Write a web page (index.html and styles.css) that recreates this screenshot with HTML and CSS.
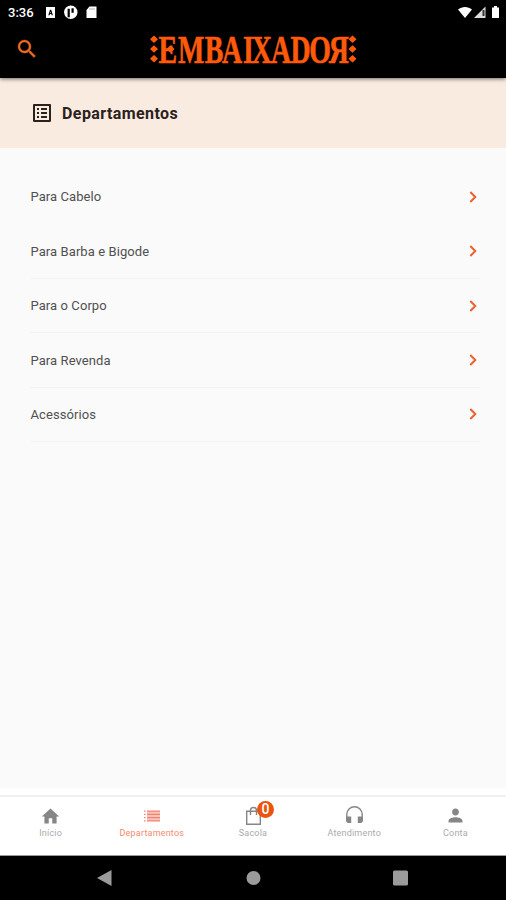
FILE: index.html
```html
<!DOCTYPE html>
<html lang="pt-BR">
<head>
  <meta charset="UTF-8" />
  <meta name="viewport" content="width=device-width, initial-scale=1.0" />
  <title>Embaixador - Departamentos</title>
  <link rel="stylesheet" href="styles.css">
</head>
<body>

<header class="top">
  <div class="status">
    <span class="clock">3:36</span>
    <svg class="notices" width="54" height="16" viewBox="0 0 54 16">
      <path fill="#fff" fill-rule="evenodd" d="M2 3h9v11H2zM4.300 11.200h1.300l.4-1.200h1.300l.4 1.200h1.200L7.200 5.800H6zM6.200 9l.4-1.600.5 1.600z"/>
      <circle cx="26.800" cy="8.300" r="6.700" fill="#fff"/>
      <path d="M24.700 4.800v8.400M28.600 4.200v4.600" stroke="#000" stroke-width="2.200"/>
      <path fill="#fff" d="M45.500 2.500h7v11.500H42.500v-8z"/>
      <path d="M46 4v2M48 4v2M50 4v2" stroke="#999" stroke-width=".8"/>
    </svg>
    <svg class="signals" width="46" height="16" viewBox="0 0 46 16">
      <path fill="#fff" d="M1 5.500C5 2 11 2 15 5.500L8 14z"/>
      <path fill="#ddd" d="M17 14L28.500 2.500V14z"/>
      <path d="M26.500 6v6" stroke="#333" stroke-width="2"/>
      <path fill="#fff" d="M35 3.500h2V2h3v1.500h2V14h-7z"/>
    </svg>
  </div>
  <div class="brand-bar">
    <svg class="search" width="24" height="24" viewBox="0 0 24 24">
      <path d="M15.500 14h-.79l-.28-.27A6.471 6.471 0 0 0 16 9.500 6.500 6.500 0 1 0 9.500 16c1.610 0 3.090-.59 4.230-1.570l.27.28v.79l5 4.990L20.490 19l-4.990-5zm-6 0C7.010 14 5 11.990 5 9.500S7.010 5 9.500 5 14 7.010 14 9.500 11.990 14 9.500 14z"/>
    </svg>
    <svg class="logo" width="208" height="34" viewBox="0 0 208 34">
      <g class="logo-marks">
        <path d="M5 3.500l4 3.800-4 3.800-4-3.800zM5 13.200l4 3.800-4 3.800-4-3.800zM5 22.900l4 3.800-4 3.800-4-3.800z"/>
        <path d="M203.500 3.500l4 3.800-4 3.800-4-3.800zM203.500 13.200l4 3.800-4 3.800-4-3.800zM203.500 22.900l4 3.800-4 3.800-4-3.800z"/>
        <path d="M21.500 13.300l4 3.700-4 3.700-4-3.700z"/>
      </g>
      <text class="logo-text" transform="scale(.68 1)" y="30.500" x="14 42.500 82 107.400 138.200 151.200 179.400 208 235.600 264.500">EMBAIXADOЯ</text>
    </svg>
  </div>
</header>

<section class="heading">
  <svg width="24" height="24" viewBox="0 0 24 24">
    <path fill="#2b211d" d="M19 5v14H5V5h14m1.100-2H3.900c-.5 0-.9.4-.9.900v16.200c0 .4.400.9.900.9h16.200c.4 0 .9-.5.900-.9V3.900c0-.5-.5-.9-.9-.9zM11 7h6v2h-6V7zm0 4h6v2h-6v-2zm0 4h6v2h-6zM7 7h2v2H7zm0 4h2v2H7zm0 4h2v2H7z"/>
  </svg>
  <h1>Departamentos</h1>
</section>

<main>
  <ul class="departments">
    <li><span>Para Cabelo</span><svg class="chevron" viewBox="0 0 8 12"><path d="M1.300 1l5 5-5 5"/></svg></li>
    <li><span>Para Barba e Bigode</span><svg class="chevron" viewBox="0 0 8 12"><path d="M1.300 1l5 5-5 5"/></svg></li>
    <li><span>Para o Corpo</span><svg class="chevron" viewBox="0 0 8 12"><path d="M1.300 1l5 5-5 5"/></svg></li>
    <li><span>Para Revenda</span><svg class="chevron" viewBox="0 0 8 12"><path d="M1.300 1l5 5-5 5"/></svg></li>
    <li><span>Acessórios</span><svg class="chevron" viewBox="0 0 8 12"><path d="M1.300 1l5 5-5 5"/></svg></li>
  </ul>
</main>

<nav class="tabs">
  <a class="tab">
    <svg width="21" height="20" viewBox="0 0 24 23"><path d="M10 20v-6h4v6h5v-8h3L12 3 2 12h3v8z"/></svg>
    <span>Início</span>
  </a>
  <a class="tab active">
    <svg width="20" height="20" viewBox="0 0 20 20">
      <path class="list-fill" d="M5 5h13v10H5z"/>
      <path d="M5 4.500h13v1.300H5zM5 7.800h13v1.300H5zM5 11h13v1.300H5zM5 14.200h13v1.300H5zM2 4.500h1.500v1.300H2zM2 7.800h1.500v1.300H2zM2 11h1.500v1.300H2zM2 14.200h1.500v1.300H2z"/>
    </svg>
    <span>Departamentos</span>
  </a>
  <a class="tab">
    <span class="bag">
      <svg width="20" height="20" viewBox="0 0 20 20"><path class="line" d="M3.700 5.300h13.600v13H3.700zM7.500 9V4.500a3 3 0 0 1 6 0V9"/></svg>
      <b class="badge">0</b>
    </span>
    <span>Sacola</span>
  </a>
  <a class="tab">
    <svg width="20" height="20" viewBox="0 0 20 20"><path class="line" d="M2.800 15V8.500a7.700 7.700 0 0 1 15.400 0V15"/><path d="M2.200 10.500h5V17H3.700L2.200 15.500zM13.800 10.500h5v5L17.300 17h-3.500z"/></svg>
    <span>Atendimento</span>
  </a>
  <a class="tab">
    <svg width="21" height="20" viewBox="0 1 24 23"><path d="M12 12c2.210 0 4-1.790 4-4s-1.790-4-4-4-4 1.790-4 4 1.790 4 4 4zm0 2c-2.670 0-8 1.340-8 4v2h16v-2c0-2.660-5.330-4-8-4z"/></svg>
    <span>Conta</span>
  </a>
</nav>

<footer class="system">
  <svg width="16" height="18" viewBox="0 0 16 18"><path d="M-1 9L13.500 1v16z"/></svg>
  <svg width="16" height="18" viewBox="0 0 16 18"><circle cx="8.500" cy="9" r="7"/></svg>
  <svg width="16" height="18" viewBox="0 0 16 18"><rect x="1" y="1.500" width="15" height="15" rx="1.500"/></svg>
</footer>

</body>
</html>
```
FILE: styles.css
```css
* {
  box-sizing: border-box;
}
body {
  margin: 0;
  height: 900px;
  display: flex;
  flex-direction: column;
  background: #fafafa;
  font-family: Roboto, "Liberation Sans", sans-serif;
  color: #505050;
  overflow: hidden;
}
svg {
  display: block;
  flex: none;
  overflow: visible;
}

/* status bar + logo */
.top {
  position: relative;
  height: 78px;
  background: #000;
  box-shadow: 0 1px 4px rgba(0, 0, 0, 0.55);
}
.status {
  display: flex;
  align-items: center;
  height: 24px;
  padding: 0 5px 0 8px;
}
.clock {
  width: 36px;
  color: #fff;
  font-size: 13px;
  font-weight: 500;
}
.notices {
  margin-top: -1px;
}
.signals {
  margin-left: auto;
  margin-right: -2px;
}
.brand-bar {
  position: relative;
  display: flex;
  justify-content: center;
  padding-top: 8px;
}
.search {
  position: absolute;
  left: 15px;
  top: 13px;
  fill: #f26a1b;
  stroke: #f26a1b;
  stroke-width: 0.4;
}
.logo-text {
  font-family: "Liberation Serif", serif;
  font-size: 41px;
  font-weight: bold;
  fill: #ff5a0a;
  stroke: #ff5a0a;
  stroke-width: 0.6;
}
.logo-marks {
  fill: #ff5a0a;
}

.heading {
  display: flex;
  align-items: center;
  gap: 8px;
  height: 70px;
  padding: 0 30px;
  background: #faebe1;
}
.heading h1 {
  margin: 0;
  font-size: 16px;
  font-weight: 700;
  letter-spacing: 0.42px;
  color: #2b211d;
}

main {
  flex: 1;
}
.departments {
  list-style: none;
  margin: 0;
  padding: 22.200px 26px 0 30px;
}
.departments li {
  display: flex;
  align-items: center;
  justify-content: space-between;
  height: 54.400px;
  padding-right: 3px;
  border-bottom: 1px solid #f4f4f4;
  font-size: 13px;
  letter-spacing: 0.08px;
}
.departments li:first-child {
  border-bottom-color: transparent;
}
.departments span {
  padding-left: 0.500px;
}
.chevron {
  width: 8px;
  height: 12px;
  fill: none;
  stroke: #ea6230;
  stroke-width: 2;
}

/* bottom tabs */
.tabs {
  display: flex;
  height: 68px;
  padding-top: 18px;
  background: linear-gradient(#fff 7px, #f0f0f0 7px, #f0f0f0 9px, #fff 9px);
  border-bottom: 1px solid #999;
}
.tab {
  flex: 1;
  display: flex;
  flex-direction: column;
  align-items: center;
  font-size: 9px;
  line-height: 14px;
  letter-spacing: 0.2px;
  color: #aaa;
  fill: #868686;
}
.tab > svg,
.bag {
  height: 20px;
}
.tab .line {
  fill: none;
  stroke: #868686;
  stroke-width: 1.400;
}
.tab.active {
  color: #f38b6d;
  fill: #f08575;
}
.list-fill {
  fill: #fac4bb;
}
.bag {
  position: relative;
}
.badge {
  position: absolute;
  left: 14px;
  top: -5px;
  width: 17px;
  height: 17px;
  border-radius: 50%;
  background: #ea5410;
  color: #fff;
  font-size: 14px;
  font-weight: 500;
  letter-spacing: 0;
  line-height: 17px;
  text-align: center;
}

.system {
  display: flex;
  justify-content: center;
  align-items: center;
  gap: 131px;
  height: 44px;
  background: #000;
  fill: #9b9b9b;
}
```
